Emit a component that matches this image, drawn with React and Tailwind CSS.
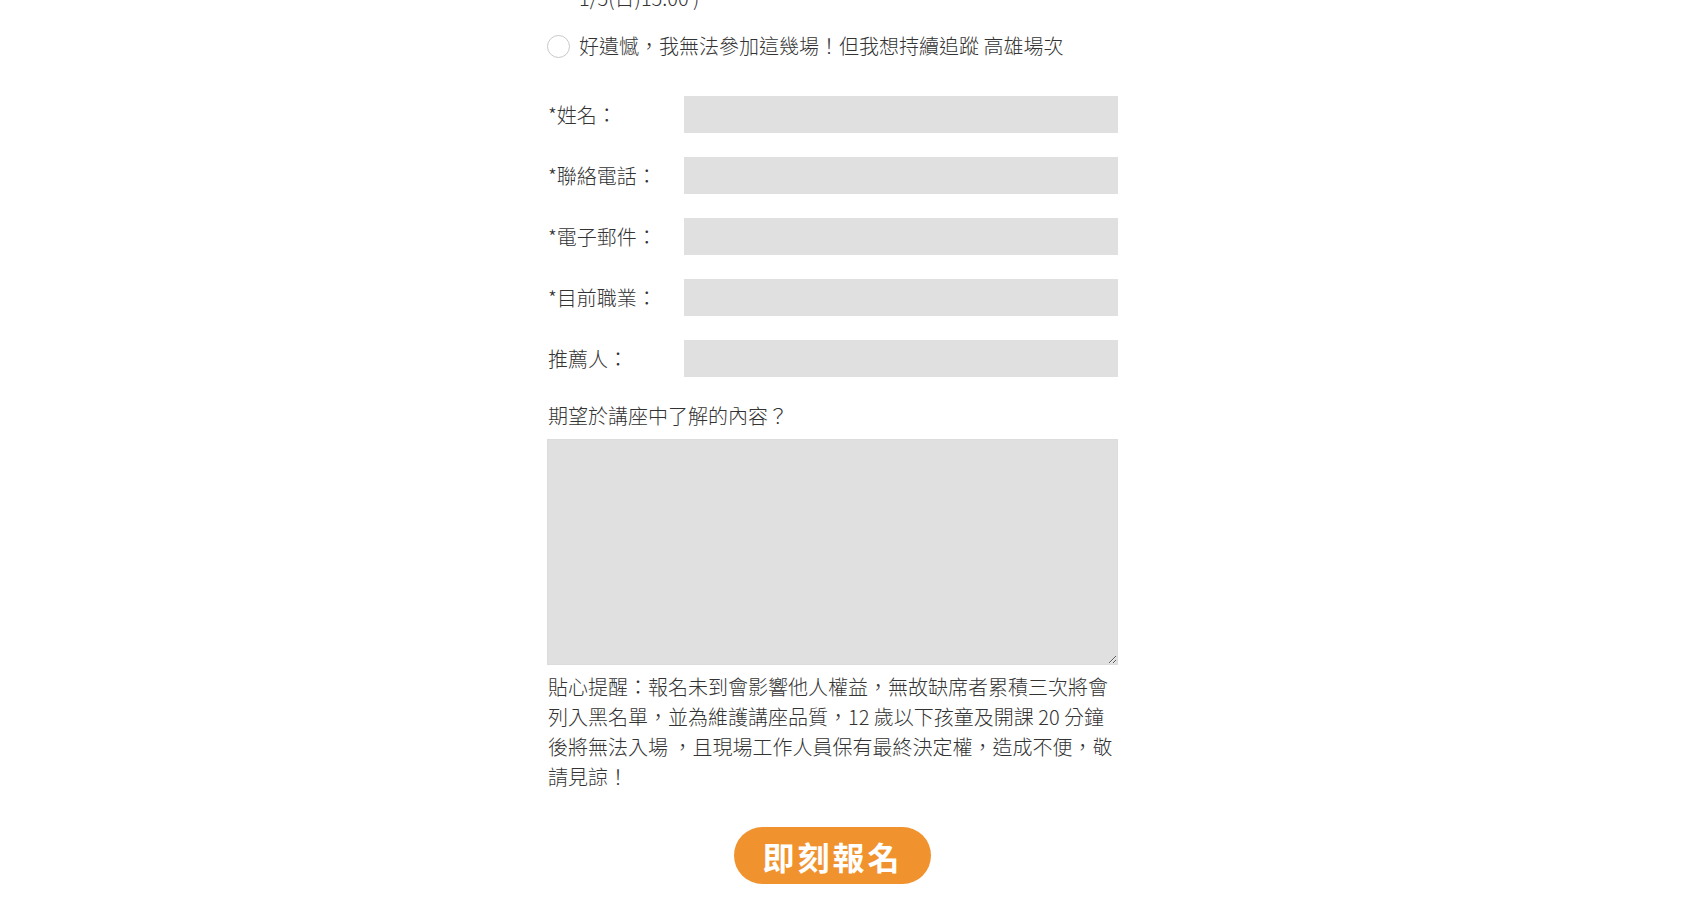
import React from 'react';

const fields = [
    { id: 'name', label: '*姓名：' },
    { id: 'phone', label: '*聯絡電話：' },
    { id: 'email', label: '*電子郵件：' },
    { id: 'job', label: '*目前職業：' },
    { id: 'referrer', label: '推薦人：' },
];

export default function App() {
    return (
        <div
            className="min-h-screen bg-white text-[#333] overflow-hidden"
            style={{ fontFamily: '"Noto Sans CJK TC", "Noto Sans", sans-serif' }}
        >
            <div className="w-[600px] mx-auto">
                <form className="w-[571px] text-[20px] leading-[30px] font-light">
                    {/* wrapped second line of the previous option, mostly scrolled off */}
                    <div className="-mt-[17px] pl-[32px]">1/5(日)15:00 )</div>

                    <label className="flex items-center gap-[9px] mt-[18px]">
                        <span className="w-[23px] h-[23px] rounded-full border border-[#c8c8c8] bg-white shrink-0" />
                        <span>好遺憾，我無法參加這幾場！但我想持續追蹤 高雄場次</span>
                    </label>

                    <div className="mt-[35px] flex flex-col gap-[24px]">
                        {fields.map(f => (
                            <div key={f.id} className="flex items-center">
                                <label htmlFor={f.id} className="w-[137px] shrink-0 pl-px">{f.label}</label>
                                <input
                                    id={f.id}
                                    type="text"
                                    className="w-[434px] h-[37px] bg-[#e0e0e0] border-0 outline-none px-2"
                                />
                            </div>
                        ))}
                    </div>

                    <div className="mt-[24px] pl-px">期望於講座中了解的內容？</div>
                    <textarea
                        className="mt-[8px] block w-full h-[226px] bg-[#e0e0e0] border border-[#dcdcdc] outline-none p-2"
                    />

                    <p className="mt-[7px] pl-px">
                        貼心提醒：報名未到會影響他人權益，無故缺席者累積三次將會<br />
                        列入黑名單，並為維護講座品質，12 歲以下孩童及開課 20 分鐘<br />
                        後將無法入場 ，且現場工作人員保有最終決定權，造成不便，敬<br />
                        請見諒！
                    </p>

                    <div className="mt-[35px] flex justify-center">
                        <button
                            type="submit"
                            className="w-[197px] h-[57px] rounded-full bg-[#f0932f] text-white text-[32px] font-bold tracking-[3px] leading-none flex items-center justify-center"
                        >
                            即刻報名
                        </button>
                    </div>
                </form>
            </div>
        </div>
    );
}
